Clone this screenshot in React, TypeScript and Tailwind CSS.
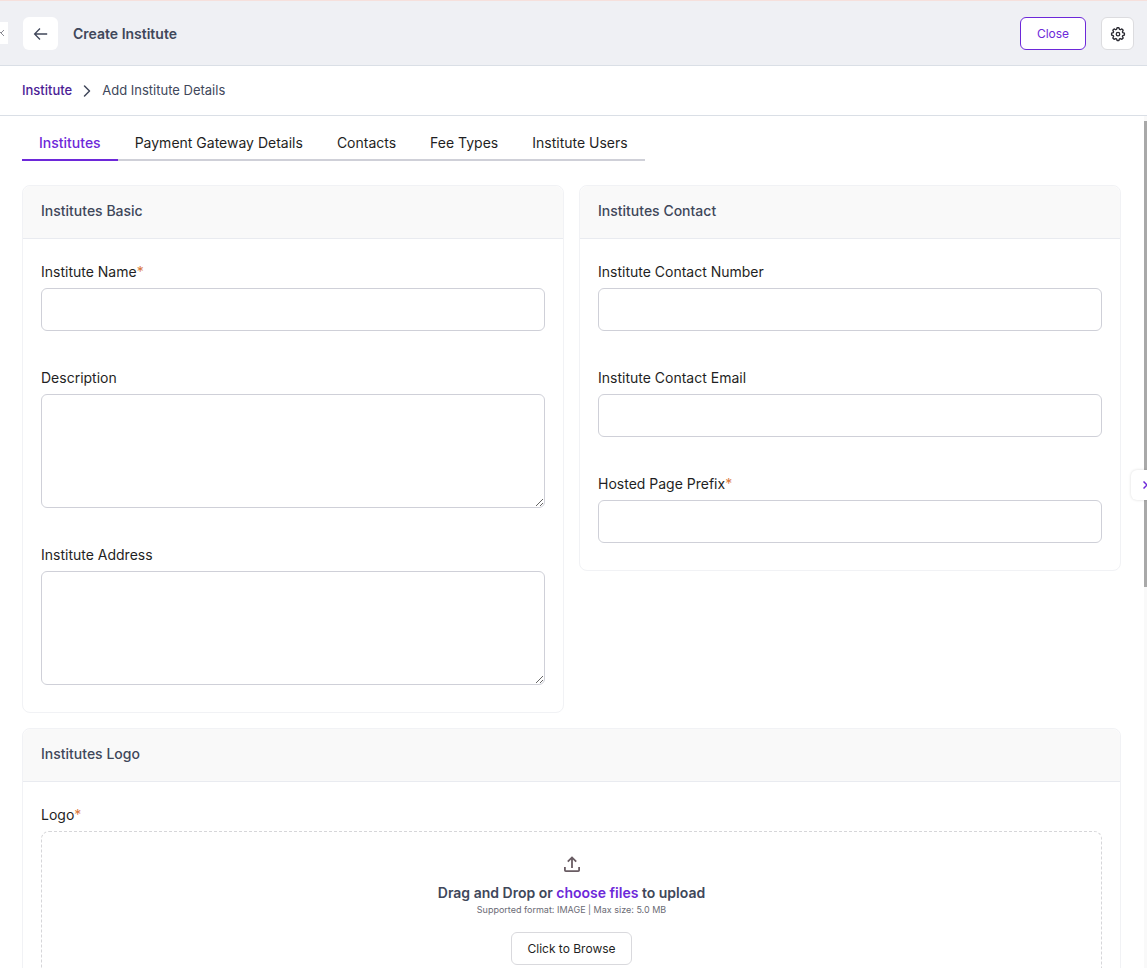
import type { ReactNode } from "react";
import { ChevronRight } from "lucide-react";

const tabs = [
  "Institutes",
  "Payment Gateway Details",
  "Contacts",
  "Fee Types",
  "Institute Users",
];

const Card = ({ title, children }: { title: string; children: ReactNode }) => (
  <section className="rounded-lg border border-[#f1f2f5]">
    <h2 className="flex h-[53px] items-center rounded-t-lg border-b border-[#e9ebf0] bg-[#f9f9f9] px-[18px] pb-0.5 text-sm font-medium text-[#40475a]">
      {title}
    </h2>
    <div className="flex flex-col gap-[37px] px-[18px] pt-[23px] pb-[27px]">
      {children}
    </div>
  </section>
);

type FieldProps = {
  id: string;
  label: string;
  required?: boolean;
  multiline?: boolean;
};

const FieldLabel = ({ id, label, required }: FieldProps) => (
  <label htmlFor={id} className="text-sm leading-5 text-[#1f1f24]">
    {label}
    {required && <span className="text-[#d9773a]">*</span>}
  </label>
);

const Field = (props: FieldProps) => (
  <div className="flex flex-col gap-1.5">
    <FieldLabel {...props} />
    {props.multiline ? (
      <textarea
        id={props.id}
        className="block h-[114px] w-full resize rounded-md border border-[#cfd0d8] bg-white px-3 py-2 text-sm outline-none"
      />
    ) : (
      <input
        id={props.id}
        type="text"
        className="h-[43px] w-full rounded-md border border-[#cfd0d8] bg-white px-3 text-sm outline-none"
      />
    )}
  </div>
);

const ArrowLeft = () => (
  <svg width="16" height="16" viewBox="0 0 16 16" fill="none" stroke="#40475a" strokeWidth="1.3">
    <path d="M14.2 8H1.8M7 2.5 1.6 8 7 13.5" />
  </svg>
);

const Gear = () => (
  <svg width="16" height="16" viewBox="0 0 24 24" fill="none" stroke="#2b2b33" strokeWidth="2" strokeLinejoin="round">
    <path d="M9.8 5.1 10.6 2.6h2.8l.8 2.5 1.2.5 2.4-1.2 2 2-1.2 2.4.5 1.2 2.5.8v2.8l-2.5.8-.5 1.2 1.2 2.4-2 2-2.4-1.2-1.2.5-.8 2.5h-2.8l-.8-2.5-1.2-.5-2.4 1.2-2-2 1.2-2.4-.5-1.2-2.5-.8v-2.8l2.5-.8.5-1.2-1.2-2.4 2-2 2.4 1.2z" />
    <circle cx="12" cy="12.2" r="2.6" />
  </svg>
);

const UploadIcon = () => (
  <svg width="16" height="16" viewBox="0 0 16 16" fill="none" stroke="#695c63" strokeWidth="1.8">
    <path d="M8 12V1.6M3.8 5.6 8 1.4l4.2 4.2M.9 11v3.2q0 .9.9.9h12.4q.9 0 .9-.9V11" />
  </svg>
);

const Header = () => (
  <header className="flex h-[66px] shrink-0 items-center border-t border-b border-t-[#f6e0dc] border-b-[#dadfe6] bg-[#eff0f4] pt-px pr-[13px]">
    <button
      aria-label="Collapse sidebar"
      className="mb-0.5 flex h-[22px] w-2 items-center overflow-hidden bg-white"
    >
      <svg width="5" height="8" viewBox="0 0 5 8" fill="none" stroke="#8a8a92">
        <path d="M4 1 1 4l3 3M0 3.5h1" />
      </svg>
    </button>
    <button
      aria-label="Back"
      className="ml-[15px] flex h-[33px] w-[35px] items-center justify-center rounded-md bg-white"
    >
      <ArrowLeft />
    </button>
    <h1 className="ml-[15px] text-sm font-semibold text-[#40475a]">Create Institute</h1>
    <button className="ml-auto h-[33px] w-[66px] rounded-md border border-[#6d28d9] bg-white text-xs text-[#6d28d9]">
      Close
    </button>
    <button
      aria-label="Settings"
      className="ml-[15px] flex size-[33px] items-center justify-center rounded-md border border-[#dcdcdf] bg-white"
    >
      <Gear />
    </button>
  </header>
);

const Breadcrumb = () => (
  <nav
    aria-label="Breadcrumb"
    className="flex h-[50px] shrink-0 items-center border-b border-[#dadfe6] px-[22px]"
  >
    <a href="#institute" className="text-[13px] font-medium text-[#4c1d95]">
      Institute
    </a>
    <ChevronRight className="mx-[5px] size-5 text-[#40475a]" strokeWidth={1.8} />
    <span className="text-[13px] text-[#40475a]">Add Institute Details</span>
  </nav>
);

const UploadZone = () => (
  <div className="flex flex-col gap-1.5">
    <FieldLabel id="logo" label="Logo" required />
    <div className="flex flex-col items-center rounded-lg border border-dashed border-[#d6d6d9] pt-6 pb-6">
      <UploadIcon />
      <p className="mt-[11px] text-sm leading-5 font-semibold text-[#40475a]">
        Drag and Drop or{" "}
        <label htmlFor="logo" className="cursor-pointer text-[#6d28d9]">
          choose files
        </label>{" "}
        to upload
      </p>
      <p className="text-[9px] leading-[14px] text-[#6b6b75]">
        Supported format: IMAGE | Max size: 5.0 MB
      </p>
      <input id="logo" type="file" accept="image/*" className="hidden" />
      <button className="mt-[15px] h-[33px] rounded-md border border-[#d9d9dd] bg-white px-[15px] text-xs text-[#1f1f24]">
        Click to Browse
      </button>
    </div>
  </div>
);

export default function App() {
  return (
    <div className="flex h-screen flex-col overflow-hidden bg-white font-['Inter',sans-serif]">
      <Header />
      <Breadcrumb />
      <div className="relative flex min-h-0 flex-1">
        <main className="min-w-0 flex-1 overflow-hidden pt-2 pr-[23px] pl-[22px]">
          <div role="tablist" className="flex w-fit">
            {tabs.map((tab, i) => (
              <button
                key={tab}
                role="tab"
                aria-selected={i === 0}
                className={
                  i === 0
                    ? "h-[37px] border-b-2 border-[#6d28d9] px-[17px] pt-0.5 text-sm font-medium text-[#6d28d9]"
                    : "h-[37px] border-b-2 border-[#cfd0d8] px-[17px] pt-0.5 text-sm text-[#1f1f24]"
                }
              >
                {tab}
              </button>
            ))}
          </div>

          <div className="mt-6 grid grid-cols-2 items-start gap-[15px]">
            <Card title="Institutes Basic">
              <Field id="name" label="Institute Name" required />
              <Field id="description" label="Description" multiline />
              <Field id="address" label="Institute Address" multiline />
            </Card>
            <Card title="Institutes Contact">
              <Field id="phone" label="Institute Contact Number" />
              <Field id="email" label="Institute Contact Email" />
              <Field id="prefix" label="Hosted Page Prefix" required />
            </Card>
            <div className="col-span-2">
              <Card title="Institutes Logo">
                <UploadZone />
              </Card>
            </div>
          </div>
        </main>

        {/* scroll track */}
        <div className="w-[3px] shrink-0 bg-[#f9f9f9] pt-[5px]">
          <div className="h-[55%] bg-[#a9a9a9]" />
        </div>

        {/* drawer handle */}
        <button
          aria-label="Open panel"
          className="absolute top-[354px] right-0 flex h-[30px] w-4 items-center justify-end overflow-hidden rounded-l-md bg-white shadow-[0_0_3px_rgba(0,0,0,0.15)]"
        >
          <svg width="4" height="8" viewBox="0 0 4 8" fill="none" stroke="#6d28d9" strokeWidth="1.5">
            <path d="M.5.5 4 4 .5 7.5" />
          </svg>
        </button>
      </div>
    </div>
  );
}
